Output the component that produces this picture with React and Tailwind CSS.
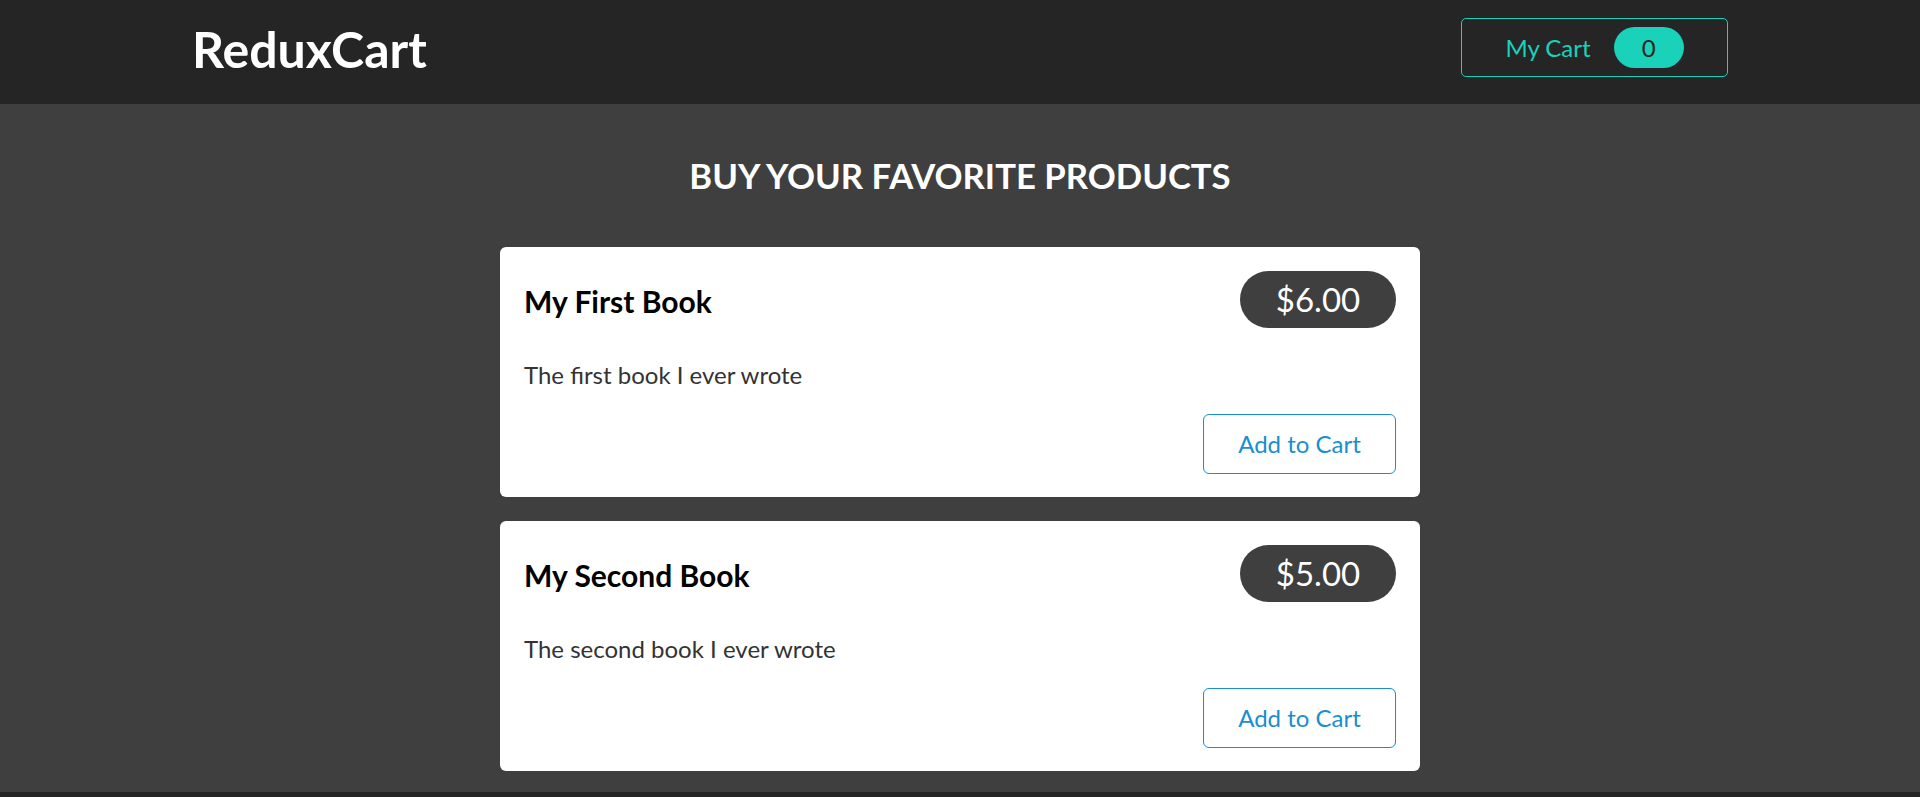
import React from "react";

const products = [
  { title: "My First Book", price: "$6.00", description: "The first book I ever wrote" },
  { title: "My Second Book", price: "$5.00", description: "The second book I ever wrote" },
];

function ProductCard({ title, price, description }) {
  return (
    <div className="w-[920px] bg-white rounded-[6px] px-6 pt-6 pb-[23px] flex flex-col">
      <div className="flex justify-between items-center h-[57px]">
        <h3 className="pt-[3px] text-[30px] leading-[36px] font-bold text-black">{title}</h3>
        <div className="w-[156px] h-[57px] rounded-full bg-[#3f3f3f] text-white text-[33px] flex items-center justify-center">
          {price}
        </div>
      </div>
      <p className="mt-[30px] text-[24px] leading-[33px] text-[#333333]">{description}</p>
      <div className="mt-[23px] flex justify-end">
        <button className="w-[193px] h-[60px] border border-[#1a8ed1] rounded-[6px] text-[#1a8ed1] text-[24px] bg-white">
          Add to Cart
        </button>
      </div>
    </div>
  );
}

export default function App() {
  return (
    <div className="min-h-screen bg-[#252525]" style={{ fontFamily: "Lato, 'Noto Sans', sans-serif" }}>
      <header className="h-[104px] bg-[#252525] px-[10%] flex items-center justify-between">
        <h1 className="-mt-[6px] text-[50px] leading-[60px] font-bold text-white">ReduxCart</h1>
        <button className="w-[267px] h-[59px] -mt-[9px] border border-[#1ad1b9] rounded-[5px] flex items-center justify-center gap-[23px]">
          <span className="text-[#1ad1b9] text-[24px] leading-[30px]">My Cart</span>
          <span className="w-[70px] h-[41px] rounded-full bg-[#1ad1b9] text-[#252525] text-[24px] flex items-center justify-center">
            0
          </span>
        </button>
      </header>
      <main className="h-[688px] bg-[#3f3f3f] pt-[51px] flex flex-col items-center">
        <h2 className="text-[34.7px] leading-[42px] font-bold text-white uppercase mb-[50px]">
          Buy your favorite products
        </h2>
        <div className="flex flex-col gap-[24px]">
          {products.map((p) => (
            <ProductCard key={p.title} {...p} />
          ))}
        </div>
      </main>
    </div>
  );
}
